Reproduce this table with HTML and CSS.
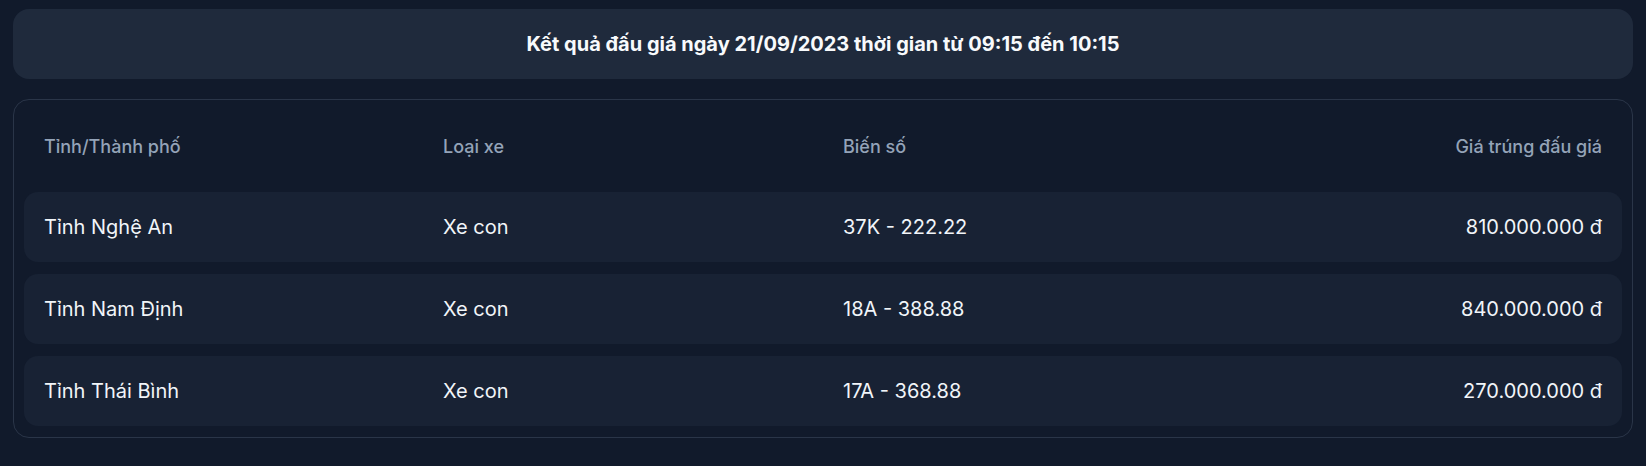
FILE: index.html
```html
<!DOCTYPE html>
<html lang="vi">
<head>
<meta charset="utf-8">
<title>Kết quả đấu giá</title>
<link rel="stylesheet" href="styles.css">
</head>
<body>
<main class="page">
  <div class="title-box">Kết quả đấu giá ngày 21/09/2023 thời gian từ 09:15 đến 10:15</div>
  <section class="card">
    <div class="row head">
      <div class="cell">Tỉnh/Thành phố</div>
      <div class="cell">Loại xe</div>
      <div class="cell">Biến số</div>
      <div class="cell right">Giá trúng đấu giá</div>
    </div>
    <div class="row item">
      <div class="cell">Tỉnh Nghệ An</div>
      <div class="cell">Xe con</div>
      <div class="cell">37K - 222.22</div>
      <div class="cell right">810.000.000 đ</div>
    </div>
    <div class="row item">
      <div class="cell">Tỉnh Nam Định</div>
      <div class="cell">Xe con</div>
      <div class="cell">18A - 388.88</div>
      <div class="cell right">840.000.000 đ</div>
    </div>
    <div class="row item">
      <div class="cell">Tỉnh Thái Bình</div>
      <div class="cell">Xe con</div>
      <div class="cell">17A - 368.88</div>
      <div class="cell right">270.000.000 đ</div>
    </div>
  </section>
</main>
</body>
</html>
```
FILE: styles.css
```css
* { box-sizing: border-box; }
html, body { margin: 0; padding: 0; }
body {
  background: #111a2b;
  font-family: Inter, "Noto Sans", sans-serif;
  color: #f1f5f9;
}
.page {
  padding: 9px 13px 13px;
  display: flex;
  flex-direction: column;
  gap: 20px;
}
.title-box {
  height: 70px;
  background: #1f2a3c;
  border-radius: 16px;
  display: flex;
  align-items: center;
  justify-content: center;
  font-size: 20px;
  font-weight: 700;
  color: #f8fafc;
}
.card {
  border: 1px solid #2a3548;
  border-radius: 16px;
  padding: 10px 10px 11px;
  display: flex;
  flex-direction: column;
  gap: 12px;
}
.row {
  height: 70px;
  display: grid;
  grid-template-columns: 399px 400px 1fr 1fr;
  align-items: center;
  padding: 0 20px;
  border-radius: 14px;
}
.row.head {
  color: #94a3b8;
  font-size: 18px;
  font-weight: 500;
  padding-top: 3px;
}
.row.item {
  background: #182234;
  font-size: 20px;
  color: #f1f5f9;
}
.cell.right { text-align: right; }
```
